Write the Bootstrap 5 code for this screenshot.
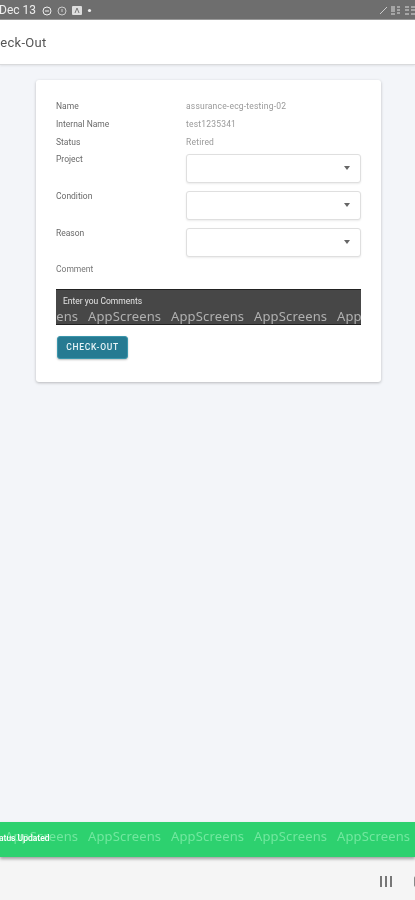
<!DOCTYPE html>
<html lang="en">
<head>
<meta charset="utf-8">
<meta name="viewport" content="width=device-width, initial-scale=1">
<title>Check-Out</title>
<link href="https://cdn.jsdelivr.net/npm/bootstrap@5.3.0/dist/css/bootstrap.min.css" rel="stylesheet">
<style>
html,body{height:100%;}
body{width:415px;height:900px;overflow:hidden;background:#f3f5f9;font-family:Roboto,"Liberation Sans",sans-serif;}
.shot{width:415px;height:900px;overflow:hidden;filter:blur(.6px);}
.sbar{height:20px;padding-top:2px;background:#6e6e6e;border-bottom:1px solid #9a9a9a;color:#eee;font-size:11px;line-height:17px;}
.sbar-date{margin-left:-1px;width:39px;font-size:12px;white-space:nowrap;}
.topbar{height:45px;background:#fff;border-bottom:1px solid #d9dadc;box-shadow:0 1px 2px rgba(0,0,0,.08);padding-top:1px;}
.topbar-title{margin-left:-16px;font-size:13px;color:#555;white-space:nowrap;letter-spacing:.3px;}
.main-area{height:757px;padding:15px 34px 0 36px;}
.form-panel{height:302px;background:#fff;border-radius:3px;box-shadow:0 1px 3px rgba(0,0,0,.25);padding:19px 20px 0 20px;}
.line{height:18px;display:flex;font-size:8.5px;line-height:14px;color:#6a6a6a;}
.key{width:130px;flex:none;}
.val{color:#999;letter-spacing:.2px;}
.pick-line{display:flex;height:37px;font-size:8.5px;line-height:11px;color:#6a6a6a;}
.pick-line .key{padding-top:1px;}
.pick{flex:1;height:29px;margin-top:1px;border:1px solid #dfdfdf;border-radius:3px;box-shadow:0 1px 2px rgba(0,0,0,.08);display:flex;align-items:center;justify-content:flex-end;padding-right:10px;background:#fff;}
.arrow{width:0;height:0;margin-top:-1px;border-left:3.5px solid transparent;border-right:3.5px solid transparent;border-top:4px solid #666;}
.comment-label{font-size:8.5px;line-height:11px;color:#777;}
.comment-box{position:relative;height:36px;margin-top:14px;background:#474747;border-top:1px solid #222;border-bottom:1px solid #222;overflow:hidden;}
.comment-hint{font-size:8.5px;line-height:11px;color:#e4e4e4;padding:6px 0 0 7px;}
.mark-strip{position:absolute;display:flex;white-space:nowrap;font-family:"Noto Sans","Liberation Sans",sans-serif;font-size:13px;line-height:16px;letter-spacing:.15px;}
.mark-strip span{width:83px;flex:none;}
.dark-strip{left:-51px;top:18px;color:#b0b0b0;}
.green-strip{left:5px;top:6px;color:#72e79f;}
.go-btn{width:71px;height:23px;margin:11px 0 0 1px;padding:0;background:#267a92;border:1px solid #3b96ac;border-radius:3px;color:#e8f4f7;font-size:8.5px;font-weight:500;letter-spacing:.7px;line-height:21px;box-shadow:0 1px 2px rgba(0,0,0,.25);}
.toast-bar{position:relative;height:35px;background:#2dd16f;box-shadow:0 2px 3px rgba(0,0,0,.35);overflow:hidden;}
.toast-text{position:absolute;left:-9px;top:11px;font-size:8.5px;line-height:11px;color:#fff;font-weight:500;white-space:nowrap;}
.navzone{height:43px;background:#f5f5f5;padding:19px 0 0 380px;gap:3px;}
.navbar-tick{width:2px;height:11px;background:#777;flex:none;}
.edge-mark{width:2px;height:11px;margin-left:19px;border-radius:2px 0 0 2px;background:#888;flex:none;}
</style>
</head>
<body>
<div class="shot">
  <div class="sbar d-flex align-items-center">
    <span class="sbar-date">Dec 13</span>
    <div class="d-flex align-items-center ms-1" style="gap:5px">
      <svg width="10" height="10" viewBox="0 0 10 10"><circle cx="5" cy="5" r="4" fill="none" stroke="#eee"/><path d="M3 5h4" stroke="#eee"/></svg>
      <svg width="10" height="10" viewBox="0 0 10 10"><circle cx="5" cy="5" r="4" fill="none" stroke="#ccc"/><path d="M5 3v3" stroke="#ccc"/></svg>
      <svg width="10" height="9" viewBox="0 0 10 9"><rect width="10" height="9" rx="1" fill="#ddd"/><path d="M3 7l2-5 2 5" fill="none" stroke="#777"/></svg>
      <svg width="5" height="5" viewBox="0 0 5 5"><circle cx="2.5" cy="2.5" r="1.6" fill="#eee"/></svg>
    </div>
    <div class="d-flex align-items-center ms-auto" style="gap:4px">
      <svg width="7" height="7" viewBox="0 0 7 7"><path d="M0 7L7 0" stroke="#ccc"/></svg>
      <svg width="9" height="10" viewBox="0 0 9 10"><path d="M0 1h4M0 3h4M0 5h4M0 8h4M6 1h3M6 4h3M6 7h3" stroke="#ddd"/></svg>
      <svg width="11" height="10" viewBox="0 0 11 10"><path d="M1 1h4M1 4h4M1 8h4M7 1h4M7 4h4M7 8h4" stroke="#ddd"/></svg>
    </div>
  </div>
  <div class="topbar d-flex align-items-center"><span class="topbar-title">Check-Out</span></div>
  <div class="main-area">
    <div class="form-panel">
      <div class="line"><span class="key">Name</span><span class="val">assurance-ecg-testing-02</span></div>
      <div class="line"><span class="key">Internal Name</span><span class="val">test1235341</span></div>
      <div class="line"><span class="key">Status</span><span class="val">Retired</span></div>
      <div class="pick-line"><span class="key">Project</span><div class="pick"><i class="arrow"></i></div></div>
      <div class="pick-line"><span class="key">Condition</span><div class="pick"><i class="arrow"></i></div></div>
      <div class="pick-line"><span class="key">Reason</span><div class="pick"><i class="arrow"></i></div></div>
      <div class="comment-label">Comment</div>
      <div class="comment-box">
        <div class="comment-hint">Enter you Comments</div>
        <div class="mark-strip dark-strip"><span>AppScreens</span><span>AppScreens</span><span>AppScreens</span><span>AppScreens</span><span>AppScreens</span></div>
      </div>
      <button type="button" class="btn go-btn">CHECK-OUT</button>
    </div>
  </div>
  <div class="toast-bar">
    <div class="mark-strip green-strip"><span>AppScreens</span><span>AppScreens</span><span>AppScreens</span><span>AppScreens</span><span>AppScreens</span></div>
    <div class="toast-text">Status Updated</div>
  </div>
  <div class="navzone d-flex">
    <i class="navbar-tick"></i><i class="navbar-tick"></i><i class="navbar-tick"></i><i class="edge-mark"></i>
  </div>
</div>
<script src="https://cdn.jsdelivr.net/npm/bootstrap@5.3.0/dist/js/bootstrap.bundle.min.js"></script>
</body>
</html>
